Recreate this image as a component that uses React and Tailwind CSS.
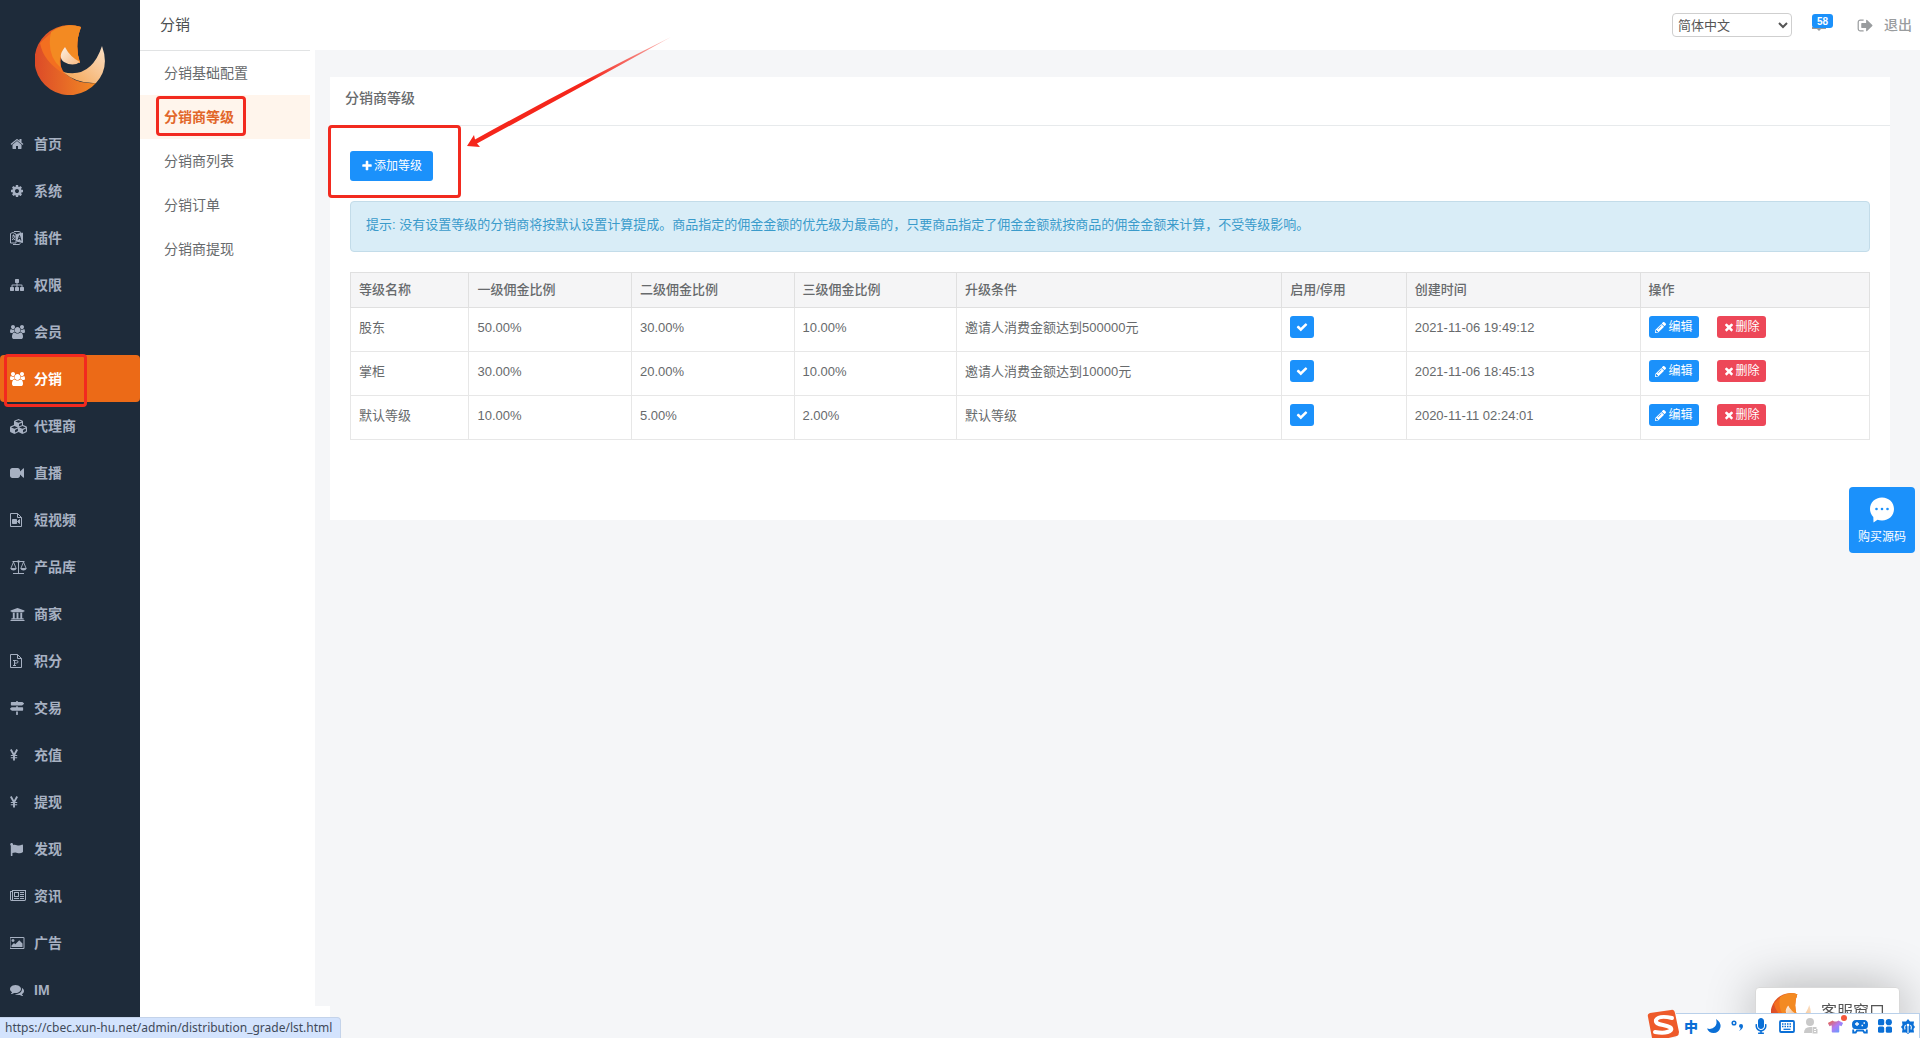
import {
  FaCubes,
  FaFlag,
  FaMapSigns,
  FaMicrophone,
  FaPencilAlt,
  FaTshirt,
  FaUniversity,
} from "react-icons/fa";

function Glyph({ w = 1792, h = 14, d }) {
  return (
    <svg viewBox={`0 0 ${w} 1792`} height={h} fill="currentColor" aria-hidden="true" className="shrink-0">
      <path d={d} />
    </svg>
  );
}

const HOME = "M1472 992v480q0 26-19 45t-45 19h-384v-384h-256v384h-384q-26 0-45-19t-19-45v-480q0-1 .5-3t.5-3l575-474 575 474q1 2 1 6zm223-69l-62 74q-8 9-21 11h-3q-13 0-21-7l-692-577-692 577q-12 8-24 7-13-2-21-11l-62-74q-8-10-7-23.5t11-21.5l719-599q32-26 76-26t76 26l244 204v-195q0-14 9-23t23-9h192q14 0 23 9t9 23v408l219 182q10 8 11 21.5t-7 23.5z";
const COG = "M1152 896q0-106-75-181t-181-75-181 75-75 181 75 181 181 75 181-75 75-181zm512-109v222q0 12-8 23t-20 13l-185 28q-19 54-39 91 35 50 107 138 10 12 10 25t-9 23q-27 37-99 108t-94 71q-12 0-26-9l-138-108q-44 23-91 38-16 136-29 186-7 28-36 28h-222q-14 0-24.5-8.5t-11.5-21.5l-28-184q-49-16-90-37l-141 107q-10 9-25 9-14 0-25-11-126-114-165-168-7-10-7-23 0-12 8-23 15-21 51-66.5t54-70.5q-27-50-41-99l-183-27q-13-2-21-12.5t-8-23.5v-222q0-12 8-23t19-13l186-28q14-46 39-92-40-57-107-138-10-12-10-24 0-10 9-23 26-36 98.5-107.5t94.5-71.5q13 0 26 10l138 107q44-23 91-38 16-136 29-186 7-28 36-28h222q14 0 24.5 8.5t11.5 21.5l28 184q49 16 90 37l142-107q9-9 24-9 13 0 25 10 129 119 165 170 7 8 7 22 0 12-8 23-15 21-51 66.5t-54 70.5q26 50 41 98l183 28q13 2 21 12.5t8 23.5z";
const SITEMAP = "M1792 1248v320q0 40-28 68t-68 28h-320q-40 0-68-28t-28-68v-320q0-40 28-68t68-28h96v-192h-512v192h96q40 0 68 28t28 68v320q0 40-28 68t-68 28h-320q-40 0-68-28t-28-68v-320q0-40 28-68t68-28h96v-192h-512v192h96q40 0 68 28t28 68v320q0 40-28 68t-68 28h-320q-40 0-68-28t-28-68v-320q0-40 28-68t68-28h96v-192q0-52 38-90t90-38h512v-192h-96q-40 0-68-28t-28-68v-320q0-40 28-68t68-28h320q40 0 68 28t28 68v320q0 40-28 68t-68 28h-96v192h512q52 0 90 38t38 90v192h96q40 0 68 28t28 68z";
const USERS = "M593 896q-162 5-265 128h-134q-82 0-138-40.5t-56-118.5q0-353 124-353 6 0 43.5 21t97.5 42.5 119 21.5q67 0 133-23-5 37-5 66 0 139 81 256zm1071 637q0 120-73 189.5t-194 69.5h-874q-121 0-194-69.5t-73-189.5q0-53 3.5-103.5t14-109 26.5-108.5 43-97.5 62-81 85.5-53.5 111.5-20q10 0 43 21.5t73 48 107 48 135 21.5 135-21.5 107-48 73-48 43-21.5q61 0 111.5 20t85.5 53.5 62 81 43 97.5 26.5 108.5 14 109 3.5 103.5zm-1024-1277q0 106-75 181t-181 75-181-75-75-181 75-181 181-75 181 75 75 181zm704 384q0 159-112.5 271.5t-271.5 112.5-271.5-112.5-112.5-271.5 112.5-271.5 271.5-112.5 271.5 112.5 112.5 271.5zm576 225q0 78-56 118.5t-138 40.5h-134q-103-123-265-128 81-117 81-256 0-29-5-66 66 23 133 23 59 0 119-21.5t97.5-42.5 43.5-21q124 0 124 353zm-128-609q0 106-75 181t-181 75-181-75-75-181 75-181 181-75 181 75 75 181z";
const VIDEO = "M1792 352v1088q0 42-39 59-13 5-25 5-27 0-45-19l-403-403v166q0 119-84.5 203.5t-203.5 84.5h-704q-119 0-203.5-84.5t-84.5-203.5v-704q0-119 84.5-203.5t203.5-84.5h704q119 0 203.5 84.5t84.5 203.5v165l403-402q18-19 45-19 12 0 25 5 39 17 39 59z";
const NEWS = "M1024 512h-384v384h384v-384zm128 640v128h-640v-128h640zm0-768v640h-640v-640h640zm640 768v128h-512v-128h512zm0-256v128h-512v-128h512zm0-256v128h-512v-128h512zm0-256v128h-512v-128h512zm-1536 960v-960h-128v960q0 26 19 45t45 19 45-19 19-45zm1664 0v-1088h-1536v1088q0 33-11 64h1483q26 0 45-19t19-45zm128-1216v1216q0 80-56 136t-136 56h-1664q-80 0-136-56t-56-136v-1088h256v-128h1792z";
const IMAGE = "M576 576q0 80-56 136t-136 56-136-56-56-136 56-136 136-56 136 56 56 136zm1024 384v448h-1408v-192l320-320 160 160 512-512zm96-704h-1600q-13 0-22.5 9.5t-9.5 22.5v1216q0 13 9.5 22.5t22.5 9.5h1600q13 0 22.5-9.5t9.5-22.5v-1216q0-13-9.5-22.5t-22.5-9.5zm160 32v1216q0 66-47 113t-113 47h-1600q-66 0-113-47t-47-113v-1216q0-66 47-113t113-47h1600q66 0 113 47t47 113z";
const COMMENTS = "M1408 768q0 139-94 257t-256.5 186.5-353.5 68.5q-86 0-176-16-124 88-278 128-36 9-86 16h-3q-11 0-20.5-8t-11.5-21q-1-3-1-6.5t.5-6.5 2-6l2.5-5 3.5-5.5 4-5 4.5-5 4-4.5q5-6 23-25t26-29.5 22.5-29 25-38.5 20.5-44q-124-72-195-177t-71-224q0-139 94-257t256.5-186.5 353.5-68.5 353.5 68.5 256.5 186.5 94 257zm384 256q0 120-71 224.5t-195 176.5q10 24 20.5 44t25 38.5 22.5 29 26 29.5 23 25q1 1 4 4.5t4.5 5 4 5 3.5 5.5l2.5 5 2 6 .5 6.5-1 6.5q-3 14-13 22t-22 7q-50-7-86-16-154-40-278-128-90 16-176 16-271 0-472-132 58 4 88 4 161 0 309-45t264-129q125-92 192-212t67-254q0-77-23-152 129 71 204 178t75 230z";
const SIGN_OUT = "M704 1440q0 4 1 20t.5 26.5-3 23.5-10 19.5-20.5 6.5h-320q-119 0-203.5-84.5t-84.5-203.5v-704q0-119 84.5-203.5t203.5-84.5h320q13 0 22.5 9.5t9.5 22.5q0 4 1 20t.5 26.5-3 23.5-10 19.5-20.5 6.5h-320q-66 0-113 47t-47 113v704q0 66 47 113t113 47h312l11.5 1 11.5 3 8 5.5 7 9 2 13.5zm928-544q0 26-19 45l-544 544q-19 19-45 19t-45-19-19-45v-288h-448q-26 0-45-19t-19-45v-384q0-26 19-45t45-19h448v-288q0-26 19-45t45-19 45 19l544 544q19 19 19 45z";
const CHECK = "M1671 566q0 40-28 68l-724 724-136 136q-28 28-68 28t-68-28l-136-136-362-362q-28-28-28-68t28-68l136-136q28-28 68-28t68 28l294 295 656-657q28-28 68-28t68 28l136 136q28 28 28 68z";
const PLUS = "M1600 736v192q0 40-28 68t-68 28h-416v416q0 40-28 68t-68 28h-192q-40 0-68-28t-28-68v-416h-416q-40 0-68-28t-28-68v-192q0-40 28-68t68-28h416v-416q0-40 28-68t68-28h192q40 0 68 28t28 68v416h416q40 0 68 28t28 68z";
const TIMES = "M1490 1322q0 40-28 68l-136 136q-28 28-68 28t-68-28l-294-294-294 294q-28 28-68 28t-68-28l-136-136q-28-28-28-68t28-68l294-294-294-294q-28-28-28-68t28-68l136-136q28-28 68-28t68 28l294 294 294-294q28-28 68-28t68 28l136 136q28 28 28 68t-28 68l-294 294 294 294q28 28 28 68z";

function FileIcon({ children }) {
  return (
    <svg width="12" height="14" viewBox="0 0 12 14" fill="none" stroke="currentColor" aria-hidden="true">
      <path d="M.5.5h7l4 4v9H.5zM7.500.500v4h4" />
      {children}
    </svg>
  );
}

function TranslateIcon() {
  return (
    <svg width="13" height="14" viewBox="0 0 13 14" fill="none" stroke="currentColor" aria-hidden="true">
      <path d="M.5 2.500L3 1.500l3 1.500v9L.5 12zM2 5h3M3.500 3.500V5M5 5q-1 3-3 4M2.300 6.500L5 9" />
      <path d="M6.500 3.500L12.500 2v9.500L6.500 10z" fill="currentColor" />
      <path d="M8 9l1.500-4.500L11 9.500M8.500 7.500h2" stroke="#1e2b3a" />
      <path d="M4 .5h5l2 1M3 13.500h6l1.500-1" />
    </svg>
  );
}

function ScaleIcon() {
  return (
    <svg width="17" height="14" viewBox="0 0 17 14" fill="none" stroke="currentColor" aria-hidden="true">
      <path d="M2.500 1.500h12M8.500 1v12M3 13.500h11" />
      <path d="M3.500 2L.8 8.500h5.400zM13.500 2l-2.700 6.500h5.400z" strokeWidth=".9" />
      <path d="M.3 8.500h6.400q-.8 2-3.200 2t-3.200-2zM10.300 8.500h6.400q-.8 2-3.200 2t-3.200-2z" fill="currentColor" stroke="none" />
      <circle cx="8.500" cy="1.500" r="1.300" fill="currentColor" stroke="none" />
    </svg>
  );
}

function YenIcon() {
  return (
    <svg width="8" height="12" viewBox="0 0 8 12" fill="none" stroke="currentColor" strokeWidth="1.900" aria-hidden="true">
      <path d="M.8.5L4 6.200L7.200.5M4 6v5.500" />
      <path d="M.8 6.500h6.400M.8 8.800h6.400" strokeWidth="1.100" />
    </svg>
  );
}

const mainNav = [
  ["首页", <Glyph d={HOME} />],
  ["系统", <Glyph d={COG} />],
  ["插件", <TranslateIcon />],
  ["权限", <Glyph d={SITEMAP} />],
  ["会员", <Glyph w={1920} d={USERS} />],
  ["分销", <Glyph w={1920} d={USERS} />],
  ["代理商", <FaCubes size={17} />],
  ["直播", <Glyph d={VIDEO} />],
  ["短视频", <FileIcon><path d="M2.500 6.500h4v4h-4zM9.500 6.500v4l-2-2z" fill="currentColor" /></FileIcon>],
  ["产品库", <ScaleIcon />],
  ["商家", <FaUniversity size={15} />],
  ["积分", <FileIcon><path d="M3 11.500h3M4.500 11.500V6.500M3 6.500h3.500q1.500 0 1.500 1.300t-1.500 1.300h-2" /></FileIcon>],
  ["交易", <FaMapSigns size={14} />],
  ["充值", <YenIcon />],
  ["提现", <YenIcon />],
  ["发现", <FaFlag size={13} />],
  ["资讯", <Glyph w={2048} d={NEWS} />],
  ["广告", <Glyph w={1920} d={IMAGE} />],
  ["IM", <Glyph d={COMMENTS} />],
];

const subNav = ["分销基础配置", "分销商等级", "分销商列表", "分销订单", "分销商提现"];

const heads = ["等级名称", "一级佣金比例", "二级佣金比例", "三级佣金比例", "升级条件", "启用/停用", "创建时间", "操作"];
const rows = [
  ["股东", "50.00%", "30.00%", "10.00%", "邀请人消费金额达到500000元", "2021-11-06 19:49:12"],
  ["掌柜", "30.00%", "20.00%", "10.00%", "邀请人消费金额达到10000元", "2021-11-06 18:45:13"],
  ["默认等级", "10.00%", "5.00%", "2.00%", "默认等级", "2020-11-11 02:24:01"],
];

function Logo({ size, id }) {
  return (
    <svg width={size} height={size} viewBox="0 0 70 70" aria-hidden="true" className="shrink-0">
      <defs>
        <linearGradient id={`${id}a`} x1="0" y1="0" x2="1" y2="0">
          <stop offset="0" stopColor="#dc4a28" />
          <stop offset="1" stopColor="#f28a24" />
        </linearGradient>
        <linearGradient id={`${id}b`} x1="0" y1="1" x2="1" y2="0">
          <stop offset="0" stopColor="#f4a24e" />
          <stop offset="1" stopColor="#fbe0c6" />
        </linearGradient>
        <linearGradient id={`${id}c`} x1="0" y1="0" x2="1" y2="1">
          <stop offset="0" stopColor="#fdf1e4" />
          <stop offset="1" stopColor="#f6b880" />
        </linearGradient>
      </defs>
      <path d="M46 2A35 35 0 1 0 61 58Q40 60 28 46Q22 36 30 22Q34 32 45 38Q39 20 46 2Z" fill={`url(#${id}a)`} />
      <path d="M46 2Q26-4 5 18Q8 36 29 49Q21 36 30 22Q34 32 45 38Q39 20 46 2Z" fill="#f36f20" />
      <path d="M46 2Q30-3 16 7Q11 30 26 43Q22 34 30 22Q34 32 45 38Q39 20 46 2Z" fill="#f38a22" />
      <path d="M28 47Q56 54 67 21Q75 43 61 58Q42 59 28 47Z" fill={`url(#${id}b)`} />
      <path d="M30 22Q35 32 45 37Q38 42 29 37Q22 32 30 22Z" fill={`url(#${id}c)`} />
    </svg>
  );
}

const markBox = "pointer-events-none absolute z-10 rounded-[4px] border-3 border-[#f22a1f]";

function Arrow() {
  return (
    <svg width="206" height="112" viewBox="0 0 206 112" aria-hidden="true" className="pointer-events-none absolute bottom-[53px] left-[116px] z-20">
      <defs>
        <linearGradient id="arrowFade" x1="0" y1="1" x2="1" y2="0">
          <stop offset=".6" stopColor="#f5261b" />
          <stop offset="1" stopColor="#f5261b" stopOpacity=".3" />
        </linearGradient>
      </defs>
      <path d="M1 110L8 99L9 103.500Q100 53 205 1Q110 54 11 107.500L14 111Z" fill="url(#arrowFade)" />
    </svg>
  );
}

function ImeBar() {
  return (
    <div className="fixed right-0 bottom-0 z-40 flex h-[25px] w-[244px] items-center justify-between border-t border-r border-[#b9d0ea] bg-white pr-1 pl-2 text-[#0a6fd6]">
      <svg width="34" height="32" viewBox="0 0 34 32" className="absolute -top-[5px] -left-[30px]" aria-hidden="true">
        <path d="M4 4L25 1Q28 0 29 4L33 23Q33 26 31 27L10 32Q7 32 6 29L2 8Q1 5 4 4Z" fill="#ee5a2a" />
        <path d="M26 9Q13 6 10 11Q9 15 17 16Q27 18 25 21Q21 25 9 23" fill="none" stroke="#fff" strokeWidth="4" strokeLinecap="round" />
      </svg>
      <span className="font-['Noto_Sans_CJK_SC',sans-serif] text-[14px] leading-4 font-black">中</span>
      <svg width="14" height="14" viewBox="0 0 14 14" fill="currentColor" aria-hidden="true">
        <path d="M9 0Q14 3 13.500 8Q12 14 6.500 14Q2 14 0 9.500Q5 11 8 7.500Q10.500 4.500 9 0Z" />
      </svg>
      <svg width="13" height="14" viewBox="0 0 13 14" aria-hidden="true">
        <circle cx="3" cy="4" r="1.800" fill="none" stroke="currentColor" strokeWidth="1.500" />
        <path d="M8 7a2 2 0 1 1 4 0q0 3-4 5q2-2 1.500-3.300Q8 8.500 8 7z" fill="currentColor" />
      </svg>
      <FaMicrophone size={16} />
      <svg width="16" height="13" viewBox="0 0 16 13" aria-hidden="true">
        <rect x="1" y="1" width="14" height="11" rx="1" fill="none" stroke="currentColor" strokeWidth="1.800" />
        <path d="M3 4h10M3 6.500h10" stroke="currentColor" strokeWidth="1.300" strokeDasharray="1.500 1" />
        <path d="M4.500 9.300h7" stroke="currentColor" strokeWidth="1.300" />
      </svg>
      <svg width="14" height="16" viewBox="0 0 14 16" fill="#c9c9c9" aria-hidden="true">
        <circle cx="6" cy="4" r="4" />
        <path d="M0 15Q0 9 6 9h2v6z" />
        <path d="M8.500 9h4v2h1v4.500h-5z" />
        <path d="M10 11.500h2M10 13.500h2" stroke="#fff" />
      </svg>
      <span className="relative">
        <svg width="0" height="0" className="absolute" aria-hidden="true">
          <linearGradient id="shirt" x1="0" y1="0" x2="1" y2="1">
            <stop offset="0" stopColor="#f0603a" />
            <stop offset=".5" stopColor="#b07bf5" />
            <stop offset="1" stopColor="#4aa8ff" />
          </linearGradient>
        </svg>
        <FaTshirt size={15} fill="url(#shirt)" />
        <i className="absolute -top-1 -right-1 size-[6px] rounded-full bg-[#f4573b]" />
      </span>
      <svg width="16" height="15" viewBox="0 0 16 15" fill="currentColor" aria-hidden="true">
        <path d="M4 1h8q4 0 4 4.500t-3 4.500H3Q0 10 0 5.500t4-4.500z" />
        <path d="M1.200 10.500v3h2.500l1.300-2h6l1.300 2h2.500v-3" fill="none" stroke="currentColor" strokeWidth="1.800" />
        <path d="M3 5h4M5 3v4M9.500 6.500H11M11.500 4H13" stroke="#fff" strokeWidth="1.300" />
      </svg>
      <svg width="14" height="14" viewBox="0 0 14 14" fill="currentColor" aria-hidden="true">
        <rect width="6.200" height="6.200" rx="1.500" />
        <circle cx="10.800" cy="3.200" r="3.100" />
        <rect y="7.600" width="6.200" height="6.200" rx="1.500" />
        <rect x="7.800" y="7.600" width="6.200" height="6.200" rx="1.500" />
      </svg>
      <svg width="14" height="15" viewBox="0 0 14 15" aria-hidden="true">
        <path d="M7 0l2 2.500L13 2.500l-.5 3.500L14 8l-1.500 2 .5 3.500H9L7 15l-2-1.500H1L1.500 10 0 8l1.500-2L1 2.500h4z" fill="currentColor" />
        <path d="M7 14V7M4 10.500Q3 8 4.500 6M10 10.500Q11 8 9.500 6" stroke="#fff" strokeWidth="1.100" fill="none" />
        <circle cx="7" cy="6" r="1.300" fill="#fff" />
      </svg>
    </div>
  );
}

export default function App() {
  return (
    <div className="flex min-h-screen bg-[#f5f6f8] font-['Liberation_Sans','Noto_Sans_CJK_SC',sans-serif] text-[13px] text-[#676a6c]">
      <aside className="w-[140px] shrink-0 bg-[#1e2b3a]">
        <div className="flex h-[120px] items-center justify-center">
          <Logo size={70} id="brand" />
        </div>
        <nav>
          {mainNav.map(([label, icon]) => {
            const active = label === "分销";
            return (
              <a
                key={label}
                href="#"
                className={`relative flex h-[47px] items-center pt-px pl-[10px] text-[14px] font-bold ${active ? "rounded-sm bg-[#ec6a17] text-white" : "text-[#a7b1c2]"}`}
              >
                <span className="w-6 shrink-0">{icon}</span>
                {label}
                {active && <span className={`${markBox} -top-px left-[4px] h-[53px] w-[83px]`} />}
              </a>
            );
          })}
        </nav>
      </aside>

      <div className="flex min-w-0 grow flex-col">
        <header className="flex h-[50px] shrink-0 items-center bg-white pr-2 pl-5">
          <h1 className="text-[15px] text-[#4c4f52]">分销</h1>
          <select aria-label="语言" className="mr-5 ml-auto h-6 w-[120px] rounded border border-[#cfcfcf] bg-white pl-px text-[13px] text-[#555]">
            <option>简体中文</option>
          </select>
          <a href="#" aria-label="消息" className="relative mr-6 block h-[22px] w-[21px] text-[#999]">
            <svg width="14" height="5" viewBox="0 0 14 5" aria-hidden="true" className="absolute top-[13px] left-0">
              <path d="M0 0h14v2H9L7 4L5 2H0z" fill="#999" />
            </svg>
            <span className="absolute top-0 left-0 flex h-[14px] w-[21px] items-center justify-center rounded-[3px] bg-[#1b91fb] text-[10px] font-bold text-white">58</span>
          </a>
          <a href="#" className="flex items-center gap-[10px] text-[14px] font-medium text-[#999c9e]">
            <Glyph h={17} d={SIGN_OUT} />
            退出
          </a>
        </header>

        <div className="flex grow">
          <div className="w-[175px] shrink-0 bg-white">
            <nav className="mr-[5px] border-t border-[#e1e3e4]">
              {subNav.map((label) => {
                const active = label === "分销商等级";
                return (
                  <a
                    key={label}
                    href="#"
                    className={`relative flex h-11 items-center pl-6 text-[14px] ${active ? "bg-[#fff5ec] font-bold text-[#e2672a]" : ""}`}
                  >
                    {label}
                    {active && <span className={`${markBox} top-px left-4 h-10 w-[90px]`} />}
                  </a>
                );
              })}
            </nav>
          </div>

          <main className="min-w-0 grow pt-[27px] pr-[30px] pl-[15px]">
            <section className="bg-white pb-20">
              <h2 className="h-[49px] border-b border-[#e7eaec] px-[15px] pt-[11px] text-[14px] leading-5 font-medium">分销商等级</h2>
              <div className="px-5 pt-[25px]">
                <div className="relative h-[50px] w-[83px]">
                  <button className="flex h-[30px] w-full items-center justify-center gap-px rounded-[3px] bg-[#1b91fb] text-[12px] text-white">
                    <Glyph h={12} d={PLUS} />
                    添加等级
                  </button>
                  <span className={`${markBox} -top-[26px] -left-[22px] h-[73px] w-[133px]`} />
                  <Arrow />
                </div>
                <p className="h-[51px] rounded border border-[#c3dce9] bg-[#d9edf7] px-[15px] pt-[13px] leading-5 text-[#3a9bcb]">
                  提示: 没有设置等级的分销商将按默认设置计算提成。商品指定的佣金金额的优先级为最高的，只要商品指定了佣金金额就按商品的佣金金额来计算，不受等级影响。
                </p>
                <table className="mt-5 w-full table-fixed border-collapse text-left [&_td]:border [&_td]:border-[#e7e7e7] [&_td]:px-2 [&_td]:align-top [&_th]:border [&_th]:border-[#e0e0e0] [&_th]:px-2">
                  <colgroup>
                    <col className="w-[7.8%]" />
                    <col className="w-[10.7%]" />
                    <col className="w-[10.7%]" />
                    <col className="w-[10.7%]" />
                    <col className="w-[21.4%]" />
                    <col className="w-[8.2%]" />
                    <col className="w-[15.4%]" />
                    <col />
                  </colgroup>
                  <thead className="bg-[#f5f5f6]">
                    <tr className="h-[35px]">
                      {heads.map((h) => (
                        <th key={h} scope="col" className="font-medium">{h}</th>
                      ))}
                    </tr>
                  </thead>
                  <tbody>
                    {rows.map((r) => (
                      <tr key={r[0]} className="h-11 leading-6">
                        {r.slice(0, 5).map((c, i) => (
                          <td key={i} className="pt-2">{c}</td>
                        ))}
                        <td className="pt-2">
                          <button aria-label="启用" className="flex h-[22px] w-6 items-center justify-center rounded-[3px] bg-[#1b91fb] text-white">
                            <Glyph h={12} d={CHECK} />
                          </button>
                        </td>
                        <td className="pt-2">{r[5]}</td>
                        <td className="pt-2">
                          <div className="flex gap-[18px] text-[12px] text-white">
                            <button className="flex h-[22px] w-[50px] items-center justify-center gap-[3px] rounded-[3px] bg-[#1b91fb]">
                              <FaPencilAlt size={11} />
                              编辑
                            </button>
                            <button className="flex h-[22px] w-[49px] items-center justify-center gap-px rounded-[3px] bg-[#ed4758]">
                              <Glyph h={12} d={TIMES} />
                              删除
                            </button>
                          </div>
                        </td>
                      </tr>
                    ))}
                  </tbody>
                </table>
              </div>
            </section>
          </main>
        </div>
        <div className="h-8 w-[190px] bg-white" />
      </div>

      <button className="fixed top-[487px] right-[5px] z-30 flex size-[66px] flex-col items-center rounded bg-[#1b91fb] pt-[10px] text-[12px] leading-4 text-white">
        <svg width="26" height="26" viewBox="0 0 26 26" aria-hidden="true" className="mb-[6px]">
          <path d="M13 0.500C20 .5 25 5.500 25 12S20 23.500 13 23.500Q10.500 23.500 8.500 22.700L4.500 25.500L4.300 20Q1 16.500 1 12C1 5.500 6 .5 13 .5Z" fill="#fff" />
          <circle cx="7.500" cy="12" r="1.300" fill="#1b91fb" />
          <circle cx="13" cy="12" r="1.300" fill="#1b91fb" />
          <circle cx="18.500" cy="12" r="1.300" fill="#1b91fb" />
        </svg>
        购买源码
      </button>

      <div className="fixed right-5 bottom-0 z-30 flex h-[51px] w-[145px] items-start gap-[10px] rounded-t-sm border border-[#d9d9d9] bg-white pt-[5px] pl-[15px] text-[16px] text-[#555] shadow-[1px_1px_50px_rgba(0,0,0,0.3)]">
        <Logo size={40} id="chat" />
        <span className="pt-[7px] leading-6">客服窗口</span>
      </div>

      <ImeBar />

      <div className="fixed bottom-0 left-0 z-40 h-[21px] rounded-tr border-t border-r border-[#c4d3ea] bg-[#d3e3fd] pr-2 pl-[5px] font-['Noto_Sans',sans-serif] text-[12px] leading-5 text-[#3f4a59]">
        https://cbec.xun-hu.net/admin/distribution_grade/lst.html
      </div>
    </div>
  );
}
